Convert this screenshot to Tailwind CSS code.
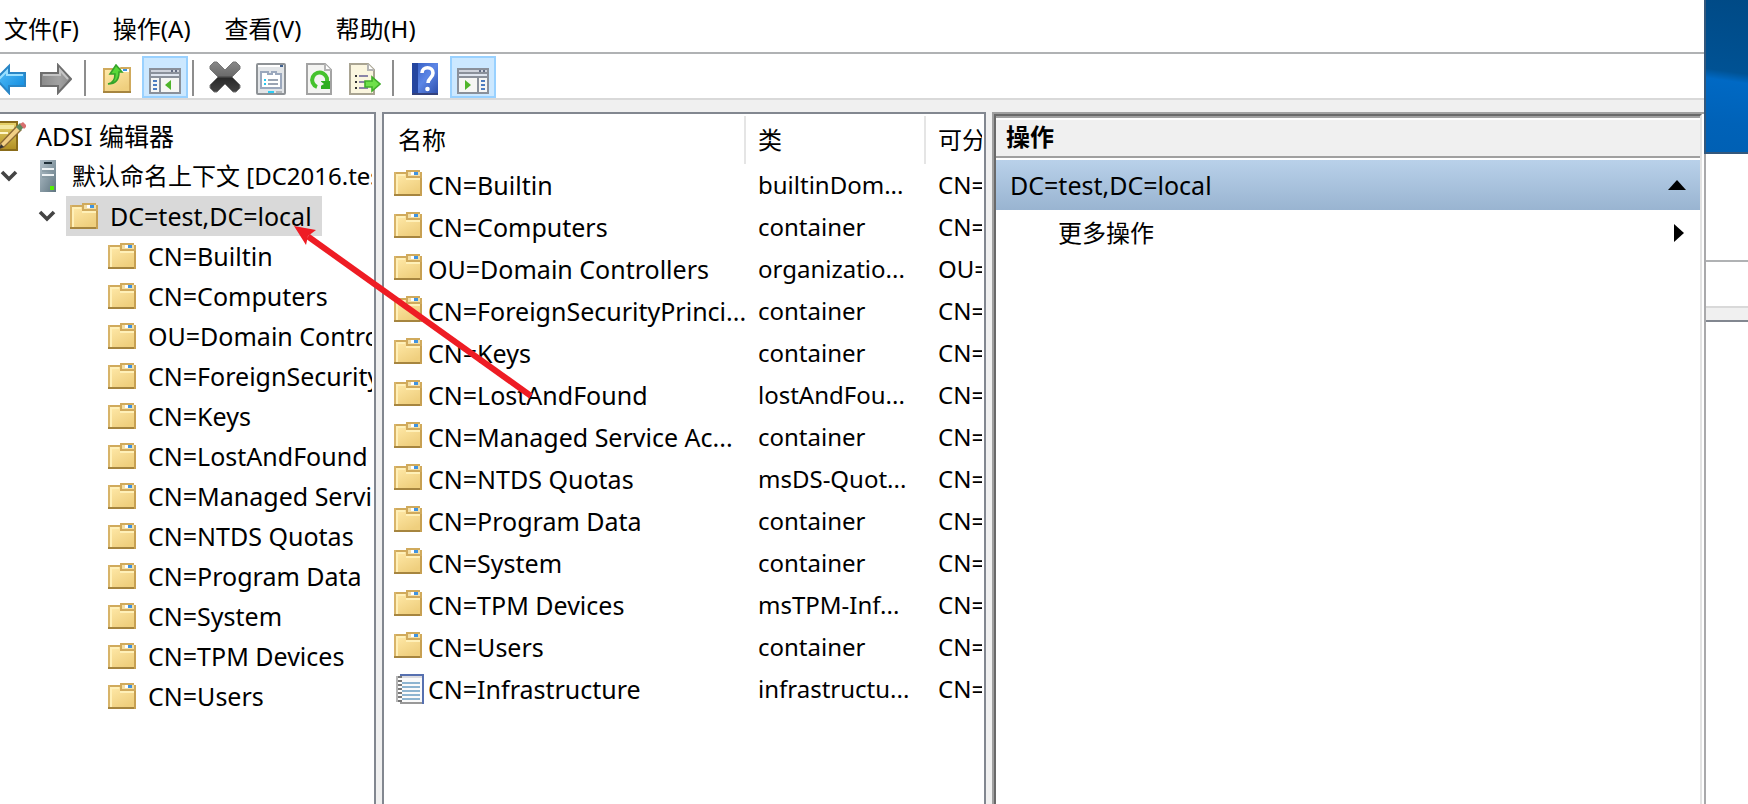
<!DOCTYPE html>
<html lang="zh-CN">
<head>
<meta charset="utf-8">
<title>ADSI 编辑器</title>
<script src="https://cdn.jsdelivr.net/npm/@tailwindcss/browser@4"></script>
</head>
<body class="relative flex min-h-screen overflow-hidden bg-white font-['Noto_Sans','Noto_Sans_CJK_SC',sans-serif] text-2xl leading-8 text-black">

<svg class="absolute size-0" aria-hidden="true">
  <defs>
    <linearGradient id="gFolder" x1="0" y1="0" x2="0.6" y2="1"><stop offset="0" stop-color="#ffe9a8"/><stop offset="1" stop-color="#efcf7e"/></linearGradient>
    <linearGradient id="gBlue" x1="0" y1="0" x2="1" y2="1"><stop offset="0" stop-color="#5cc4fb"/><stop offset="1" stop-color="#0a86dc"/></linearGradient>
    <linearGradient id="gGray" x1="0" y1="0" x2="1" y2="0"><stop offset="0" stop-color="#8a8a8a"/><stop offset="0.6" stop-color="#a2a2a2"/><stop offset="1" stop-color="#8a8a8a"/></linearGradient>
    <linearGradient id="gX" x1="0" y1="0" x2="0" y2="1"><stop offset="0" stop-color="#888"/><stop offset="0.45" stop-color="#6c6c6c"/><stop offset="0.55" stop-color="#2a2a2a"/><stop offset="1" stop-color="#444"/></linearGradient>
    <linearGradient id="gServer" x1="0" y1="0" x2="1" y2="1"><stop offset="0" stop-color="#b4c2cb"/><stop offset="1" stop-color="#5f7580"/></linearGradient>
    <linearGradient id="gHelp" x1="0" y1="0" x2="1" y2="1"><stop offset="0" stop-color="#2f57bd"/><stop offset="0.5" stop-color="#5c86e6"/><stop offset="1" stop-color="#2c4daa"/></linearGradient>
    <linearGradient id="gPad" x1="0" y1="0" x2="0" y2="1"><stop offset="0" stop-color="#e8d36a"/><stop offset="1" stop-color="#b08e22"/></linearGradient>
  </defs>
  <symbol id="folder" viewBox="0 0 28 26">
    <path d="M0 2h12V0h14v2h2v24H0z" fill="#d0aa5c"/>
    <path d="M2 4h10v4h14v16H2z" fill="url(#gFolder)"/>
    <path d="M2 5h9M3 5v19M12 9h14" stroke="#fff0b8" stroke-width="2" fill="none"/>
    <path d="M14 2h12v4H14z" fill="#f3dfa6"/>
    <path d="M17 2h7v3h-7z" fill="#fff"/><path d="M20 2h4v3h-4z" fill="#3f93e0"/>
    <path d="M0 25h28" stroke="#a6853f" stroke-width="2"/><path d="M27 8v18" stroke="#c7a052" stroke-width="2"/>
    <path d="M1 2v22" stroke="#d8b469" stroke-width="2"/>
  </symbol>
  <symbol id="chevron" viewBox="0 0 18 12"><path d="M2 2l7 7 7-7" fill="none" stroke="#444" stroke-width="3.6"/></symbol>
</svg>

<main class="flex min-w-0 flex-1 flex-col bg-[#f0f0f0]">
  <nav class="flex h-[54px] items-center gap-[34px] border-b-2 border-[#b0b2b4] bg-white pt-1.5 pl-1">
    <button class="whitespace-nowrap">文件(F)</button>
    <button class="whitespace-nowrap">操作(A)</button>
    <button class="whitespace-nowrap">查看(V)</button>
    <button class="whitespace-nowrap">帮助(H)</button>
  </nav>

  <div role="toolbar" aria-label="工具栏" class="flex h-[46px] items-end border-b-2 border-[#d9d9d9] bg-white">
    <button aria-label="后退" class="flex h-[42px] w-7 items-center pt-1">
      <svg class="h-8 w-7" viewBox="0 0 28 32"><path d="M-4 16L9 3v7h16v13H9v7z" fill="url(#gBlue)" stroke="#2a86c6" stroke-width="2"/><path d="M-1 16L7 8v4h16" fill="none" stroke="#9be0ff" stroke-width="2"/></svg>
    </button>
    <button aria-label="前进" class="ml-3 flex h-[42px] w-8 items-center pt-1">
      <svg class="size-8" viewBox="0 0 32 32"><path d="M31 16L18 2v8H1v13h17v7z" fill="url(#gGray)" stroke="#6e6e6e" stroke-width="2"/><path d="M3 12h17V7l8 9" fill="none" stroke="#c4c4c4" stroke-width="2"/></svg>
    </button>
    <span class="mb-0.5 ml-3 h-9 w-0.5 bg-[#8d8d8d]"></span>
    <button aria-label="上一级" class="ml-2 flex h-[42px] w-[46px] items-center justify-center pt-1">
      <svg class="h-[30px] w-7" viewBox="0 0 28 30"><path d="M0 4h16l2-1h10v26H0z" fill="#d0aa5c"/><path d="M2 6h24v21H2z" fill="url(#gFolder)"/><path d="M18 5h8v3h-8z" fill="#fff"/><path d="M20 5h4v2h-4z" fill="#3f93e0"/><path d="M0 28h28" stroke="#a6853f" stroke-width="2"/><path d="M5 20c6-1 7-5 7-10H7L13 1l6 7h-3c0 8-3 12-11 12z" fill="#58d838" stroke="#35a32a" stroke-width="1.6"/></svg>
    </button>
    <button aria-label="显示/隐藏控制台树" aria-pressed="true" class="ml-0.5 flex h-[42px] w-[46px] items-center justify-center border-2 border-[#99d1ff] bg-[#cce8ff] pt-2">
      <svg class="h-[26px] w-8" viewBox="0 0 32 26"><path d="M0 0h32v26H0z" fill="#8a909a"/><path d="M2 2h28v2H2z" fill="#cfd3dc"/><path d="M22 2h2v2h-2zM26 2h2v2h-2z" fill="#666e84"/><path d="M2 6h28v2H2z" fill="#dfe5ef"/><path d="M2 10h8v14H2zM12 10h18v14H12z" fill="#f6f6f4"/><path d="M4 13h4M4 17h4M4 21h4" stroke="#4c7cc0" stroke-width="2"/><path d="M22 12v10l-6-5z" fill="#4fb52b"/></svg>
    </button>
    <span class="mb-0.5 ml-1 h-9 w-0.5 bg-[#8d8d8d]"></span>
    <button aria-label="删除" class="ml-2 flex h-[42px] w-[46px] items-center justify-center">
      <svg class="size-8" viewBox="0 0 32 32"><path d="M5 1L1 5v3l8 8-8 8v3l4 4h3l8-8 8 8h3l4-4v-3l-8-8 8-8V5l-4-4h-3l-8 8-8-8z" fill="url(#gX)" stroke="#777" stroke-width="1"/></svg>
    </button>
    <button aria-label="属性" class="flex h-[42px] w-[46px] items-center justify-center pt-1">
      <svg class="h-8 w-[30px]" viewBox="0 0 30 32"><rect x="1" y="1" width="28" height="30" rx="1" fill="#e2e5e8" stroke="#8e9296" stroke-width="2"/><path d="M2 3h22" stroke="#fff" stroke-width="2"/><path d="M24 2h3v2h-3z" fill="#40618e"/><path d="M5 9h7v2h4V9h4v2h5v14H5z" fill="#fff" stroke="#9ba8bd" stroke-width="2"/><path d="M8 17h2M8 21h2" stroke="#27c5f0" stroke-width="2"/><path d="M12 17h10M12 21h10" stroke="#9aa4b3" stroke-width="2"/><path d="M12 29h6" stroke="#2ccdf5" stroke-width="2"/><path d="M20 29h6" stroke="#b4b8bc" stroke-width="2"/></svg>
    </button>
    <button aria-label="刷新" class="ml-0.5 flex h-[42px] w-[46px] items-center justify-center pt-1">
      <svg class="h-8 w-[26px]" viewBox="0 0 26 32"><path d="M1 1h18l6 6v24H1z" fill="#f4f4f2" stroke="#a3a3a3" stroke-width="2"/><path d="M19 1v6h6" fill="#fff" stroke="#b4b4b4" stroke-width="2"/><path d="M11 24a7.500 7.500 0 1 1 9-3" fill="none" stroke="#45c22d" stroke-width="4"/><path d="M15 18h9v8h-9z" fill="#2fae20"/><path d="M13 17l5 4-5 3z" fill="#f4f4f2"/></svg>
    </button>
    <button aria-label="导出列表" class="flex h-[42px] w-[46px] items-center justify-center pt-1">
      <svg class="size-8" viewBox="0 0 32 32"><path d="M1 1h18l6 6v24H1z" fill="#fbf6df" stroke="#a9a492" stroke-width="2"/><path d="M19 1v6h6" fill="#fff" stroke="#b4b4b4" stroke-width="2"/><path d="M6 13h2M6 19h2M6 25h2" stroke="#333" stroke-width="2"/><path d="M10 13h9M10 19h6M10 25h9" stroke="#8b84a8" stroke-width="2"/><path d="M16 18h7v-4l8 7-8 7v-4h-7z" fill="#6ee04a" stroke="#3fae2a" stroke-width="1.600"/></svg>
    </button>
    <span class="mb-0.5 ml-1 h-9 w-0.5 bg-[#8d8d8d]"></span>
    <button aria-label="帮助" class="ml-2 flex h-[42px] w-[46px] items-center justify-center pt-1">
      <svg class="h-8 w-[26px]" viewBox="0 0 26 32"><path d="M0 0h26v32H0z" fill="url(#gHelp)"/><path d="M0 0h6v32H0z" fill="#24459f"/><path d="M0 31h26" stroke="#34427c" stroke-width="2"/><path d="M10 10c0-7 11-7 11 0 0 5-5 5-5 10" fill="none" stroke="#fff" stroke-width="3.600"/><circle cx="15.500" cy="26" r="2.300" fill="#fff"/></svg>
    </button>
    <button aria-label="显示/隐藏操作窗格" aria-pressed="true" class="ml-0.5 flex h-[42px] w-[46px] items-center justify-center border-2 border-[#99d1ff] bg-[#cce8ff] pt-2">
      <svg class="h-[26px] w-8" viewBox="0 0 32 26"><path d="M0 0h32v26H0z" fill="#8a909a"/><path d="M2 2h28v2H2z" fill="#cfd3dc"/><path d="M22 2h2v2h-2zM26 2h2v2h-2z" fill="#666e84"/><path d="M2 6h28v2H2z" fill="#dfe5ef"/><path d="M2 10h18v14H2zM22 10h8v14h-8z" fill="#f6f6f4"/><path d="M24 13h4M24 17h4M24 21h4" stroke="#4c7cc0" stroke-width="2"/><path d="M8 12v10l6-5z" fill="#4fb52b"/></svg>
    </button>
  </div>

  <div class="flex flex-1 gap-1.5 pt-3">
    <section aria-label="控制台树" class="w-[376px] shrink-0 overflow-hidden border-t-2 border-r-2 border-[#828790] bg-white pt-0.5 pr-0.5">
      <ul class="overflow-hidden text-[25px] whitespace-nowrap">
        <li class="flex h-10 items-center gap-2.5">
          <svg class="h-[30px] w-[26px] shrink-0" viewBox="0 0 26 30"><path d="M-2 1h19v28H-2z" fill="url(#gPad)" stroke="#8a6c1a" stroke-width="2"/><path d="M0 4h14v4H0z" fill="#f3e7a0"/><path d="M0 12h8" stroke="#fff6c8" stroke-width="2"/><path d="M0 23L17 5l4 4L4 26l-5 2z" fill="#f2cf86" stroke="#8c6a35" stroke-width="1.400"/><path d="M16 6l4-4 4 4-4 4z" fill="#5c8a5e"/><path d="M20 3l3-2 3 3v2l-2 2z" fill="#d87070"/><path d="M-1 28l2-5 3 3z" fill="#333"/></svg>
          <span>ADSI 编辑器</span>
        </li>
        <li class="flex h-10 items-center">
          <button aria-label="折叠" class="shrink-0"><svg class="h-3 w-[18px]"><use href="#chevron"/></svg></button>
          <svg class="ml-[22px] h-8 w-4 shrink-0" viewBox="0 0 16 32"><path d="M0 0h16v32H0z" fill="url(#gServer)"/><path d="M4 3h8" stroke="#1f2f38" stroke-width="2"/><path d="M2 9h12M2 15h12" stroke="#eef3f5" stroke-width="2"/><path d="M2 11h12M2 17h12" stroke="#7f919b" stroke-width="1"/><path d="M10 26h4v4h-4z" fill="#54f000"/></svg>
          <span class="ml-4 text-2xl">默认命名上下文 [DC2016.test.local]</span>
        </li>
        <li class="flex h-10 items-center pl-[38px]">
          <button aria-label="折叠" class="shrink-0"><svg class="h-3 w-[18px]"><use href="#chevron"/></svg></button>
          <span class="ml-2.5 flex h-10 items-center gap-3 bg-[#d9d9d9] pr-2.5 pl-1"><svg class="h-[26px] w-7 shrink-0"><use href="#folder"/></svg>DC=test,DC=local</span>
        </li>
        <li class="flex h-10 items-center gap-3 pl-[108px]"><svg class="h-[26px] w-7 shrink-0"><use href="#folder"/></svg>CN=Builtin</li>
        <li class="flex h-10 items-center gap-3 pl-[108px]"><svg class="h-[26px] w-7 shrink-0"><use href="#folder"/></svg>CN=Computers</li>
        <li class="flex h-10 items-center gap-3 pl-[108px]"><svg class="h-[26px] w-7 shrink-0"><use href="#folder"/></svg>OU=Domain Controllers</li>
        <li class="flex h-10 items-center gap-3 pl-[108px]"><svg class="h-[26px] w-7 shrink-0"><use href="#folder"/></svg>CN=ForeignSecurityPrincipals</li>
        <li class="flex h-10 items-center gap-3 pl-[108px]"><svg class="h-[26px] w-7 shrink-0"><use href="#folder"/></svg>CN=Keys</li>
        <li class="flex h-10 items-center gap-3 pl-[108px]"><svg class="h-[26px] w-7 shrink-0"><use href="#folder"/></svg>CN=LostAndFound</li>
        <li class="flex h-10 items-center gap-3 pl-[108px]"><svg class="h-[26px] w-7 shrink-0"><use href="#folder"/></svg>CN=Managed Service Accounts</li>
        <li class="flex h-10 items-center gap-3 pl-[108px]"><svg class="h-[26px] w-7 shrink-0"><use href="#folder"/></svg>CN=NTDS Quotas</li>
        <li class="flex h-10 items-center gap-3 pl-[108px]"><svg class="h-[26px] w-7 shrink-0"><use href="#folder"/></svg>CN=Program Data</li>
        <li class="flex h-10 items-center gap-3 pl-[108px]"><svg class="h-[26px] w-7 shrink-0"><use href="#folder"/></svg>CN=System</li>
        <li class="flex h-10 items-center gap-3 pl-[108px]"><svg class="h-[26px] w-7 shrink-0"><use href="#folder"/></svg>CN=TPM Devices</li>
        <li class="flex h-10 items-center gap-3 pl-[108px]"><svg class="h-[26px] w-7 shrink-0"><use href="#folder"/></svg>CN=Users</li>
      </ul>
    </section>

    <section aria-label="对象列表" class="w-[604px] shrink-0 border-2 border-b-0 border-[#828790] bg-white pt-0.5 pr-0.5">
      <div class="overflow-hidden">
      <table class="w-full table-fixed border-separate border-spacing-0 text-left whitespace-nowrap">
        <colgroup><col class="w-[362px]"><col class="w-[180px]"><col></colgroup>
        <thead>
          <tr class="h-12">
            <th class="border-r-2 border-[#e5e5e5] p-0 pl-3.5 font-normal">名称</th>
            <th class="border-r-2 border-[#e5e5e5] p-0 pl-3 font-normal">类</th>
            <th class="overflow-hidden p-0 pl-3 font-normal">可分辨名称</th>
          </tr>
        </thead>
        <tbody>
          <tr class="h-[42px]"><td class="p-0 pl-2.5"><span class="flex items-center gap-1.5 text-[25px]"><svg class="mb-1 h-[26px] w-7 shrink-0"><use href="#folder"/></svg>CN=Builtin</span></td><td class="p-0 pl-3">builtinDom...</td><td class="overflow-hidden p-0 pl-3">CN=Builtin</td></tr>
          <tr class="h-[42px]"><td class="p-0 pl-2.5"><span class="flex items-center gap-1.5 text-[25px]"><svg class="mb-1 h-[26px] w-7 shrink-0"><use href="#folder"/></svg>CN=Computers</span></td><td class="p-0 pl-3">container</td><td class="overflow-hidden p-0 pl-3">CN=Computers</td></tr>
          <tr class="h-[42px]"><td class="p-0 pl-2.5"><span class="flex items-center gap-1.5 text-[25px]"><svg class="mb-1 h-[26px] w-7 shrink-0"><use href="#folder"/></svg>OU=Domain Controllers</span></td><td class="p-0 pl-3">organizatio...</td><td class="overflow-hidden p-0 pl-3">OU=Domain</td></tr>
          <tr class="h-[42px]"><td class="p-0 pl-2.5"><span class="flex items-center gap-1.5 text-[25px]"><svg class="mb-1 h-[26px] w-7 shrink-0"><use href="#folder"/></svg>CN=ForeignSecurityPrinci...</span></td><td class="p-0 pl-3">container</td><td class="overflow-hidden p-0 pl-3">CN=Foreign</td></tr>
          <tr class="h-[42px]"><td class="p-0 pl-2.5"><span class="flex items-center gap-1.5 text-[25px]"><svg class="mb-1 h-[26px] w-7 shrink-0"><use href="#folder"/></svg>CN=Keys</span></td><td class="p-0 pl-3">container</td><td class="overflow-hidden p-0 pl-3">CN=Keys</td></tr>
          <tr class="h-[42px]"><td class="p-0 pl-2.5"><span class="flex items-center gap-1.5 text-[25px]"><svg class="mb-1 h-[26px] w-7 shrink-0"><use href="#folder"/></svg>CN=LostAndFound</span></td><td class="p-0 pl-3">lostAndFou...</td><td class="overflow-hidden p-0 pl-3">CN=LostAnd</td></tr>
          <tr class="h-[42px]"><td class="p-0 pl-2.5"><span class="flex items-center gap-1.5 text-[25px]"><svg class="mb-1 h-[26px] w-7 shrink-0"><use href="#folder"/></svg>CN=Managed Service Ac...</span></td><td class="p-0 pl-3">container</td><td class="overflow-hidden p-0 pl-3">CN=Managed</td></tr>
          <tr class="h-[42px]"><td class="p-0 pl-2.5"><span class="flex items-center gap-1.5 text-[25px]"><svg class="mb-1 h-[26px] w-7 shrink-0"><use href="#folder"/></svg>CN=NTDS Quotas</span></td><td class="p-0 pl-3">msDS-Quot...</td><td class="overflow-hidden p-0 pl-3">CN=NTDS</td></tr>
          <tr class="h-[42px]"><td class="p-0 pl-2.5"><span class="flex items-center gap-1.5 text-[25px]"><svg class="mb-1 h-[26px] w-7 shrink-0"><use href="#folder"/></svg>CN=Program Data</span></td><td class="p-0 pl-3">container</td><td class="overflow-hidden p-0 pl-3">CN=Program</td></tr>
          <tr class="h-[42px]"><td class="p-0 pl-2.5"><span class="flex items-center gap-1.5 text-[25px]"><svg class="mb-1 h-[26px] w-7 shrink-0"><use href="#folder"/></svg>CN=System</span></td><td class="p-0 pl-3">container</td><td class="overflow-hidden p-0 pl-3">CN=System</td></tr>
          <tr class="h-[42px]"><td class="p-0 pl-2.5"><span class="flex items-center gap-1.5 text-[25px]"><svg class="mb-1 h-[26px] w-7 shrink-0"><use href="#folder"/></svg>CN=TPM Devices</span></td><td class="p-0 pl-3">msTPM-Inf...</td><td class="overflow-hidden p-0 pl-3">CN=TPM</td></tr>
          <tr class="h-[42px]"><td class="p-0 pl-2.5"><span class="flex items-center gap-1.5 text-[25px]"><svg class="mb-1 h-[26px] w-7 shrink-0"><use href="#folder"/></svg>CN=Users</span></td><td class="p-0 pl-3">container</td><td class="overflow-hidden p-0 pl-3">CN=Users</td></tr>
          <tr class="h-[42px]"><td class="p-0 pl-3"><span class="flex items-center gap-1 text-[25px]"><svg class="h-[30px] w-7 shrink-0" viewBox="0 0 28 30"><path d="M4 0h24v30H4z" fill="#5670b0"/><path d="M4 2h22v26H4z" fill="#fafafa"/><path d="M6 3h20" stroke="#dcdce0" stroke-width="2"/><path d="M6 9h18M6 13h18M6 17h18M6 21h18M6 25h18" stroke="#8db4d0" stroke-width="2"/><path d="M4 29h22" stroke="#999" stroke-width="2"/><path d="M0 3h6M0 7h6M0 11h6M0 15h6M0 19h6M0 23h6M0 27h6" stroke="#777" stroke-width="2"/><path d="M1 2v26" stroke="#b5b5b5" stroke-width="2"/></svg>CN=Infrastructure</span></td><td class="p-0 pl-3">infrastructu...</td><td class="overflow-hidden p-0 pl-3">CN=Infra</td></tr>
        </tbody>
      </table>
      </div>
    </section>

    <aside aria-label="操作" class="flex min-w-0 flex-1 border-t-2 border-l-2 border-[#a0a0a0] bg-white pr-0.5">
      <div class="min-w-0 flex-1 border-t-2 border-r-2 border-l-2 border-t-[#696969] border-r-[#e3e3e3] border-l-[#696969]">
        <h2 class="flex h-[42px] items-center border-y-2 border-[#a0a0a0] bg-[#f0f0f0] pl-2.5 font-bold shadow-[inset_0_2px_0_#fff]">操作</h2>
        <button aria-expanded="true" class="mt-0.5 flex h-[50px] w-full items-center justify-between bg-linear-to-b from-[#b9d1ea] to-[#99b4d1] px-3.5 text-[25px]">
          <span>DC=test,DC=local</span>
          <svg class="h-2.5 w-[18px]" viewBox="0 0 18 10"><path d="M9 0l9 10H0z"/></svg>
        </button>
        <button class="flex h-[46px] w-full items-center justify-between pr-4 pl-[62px]">
          <span>更多操作</span>
          <svg class="h-[18px] w-2.5" viewBox="0 0 10 18"><path d="M0 0l10 9-10 9z"/></svg>
        </button>
      </div>
    </aside>
  </div>
</main>

<div class="flex w-11 shrink-0 flex-col bg-white">
  <div class="h-[154px] border-b-2 border-l-2 border-[#34587c] bg-[linear-gradient(188deg,#004a86_0%,#005294_47%,#0069c4_53%,#0062b8_80%,#0060b4_100%)]"></div>
  <div class="flex flex-1 flex-col border-l-2 border-[#a9a9ab]">
    <div class="h-[108px] border-b-2 border-[#b0b2b4]"></div>
    <div class="h-[46px] border-b-2 border-[#d9d9d9]"></div>
    <div class="h-3.5 border-b-2 border-[#828790] bg-[#f0f0f0]"></div>
  </div>
</div>

<svg class="pointer-events-none absolute top-[220px] left-[288px] h-[184px] w-[252px]" viewBox="288 220 252 184" aria-hidden="true">
  <path d="M308 236.500L531 396" stroke="#ee1c24" stroke-width="6"/>
  <path d="M294 226l22 4-8 6-2 9z" fill="#ee1c24"/>
</svg>
</body>
</html>
